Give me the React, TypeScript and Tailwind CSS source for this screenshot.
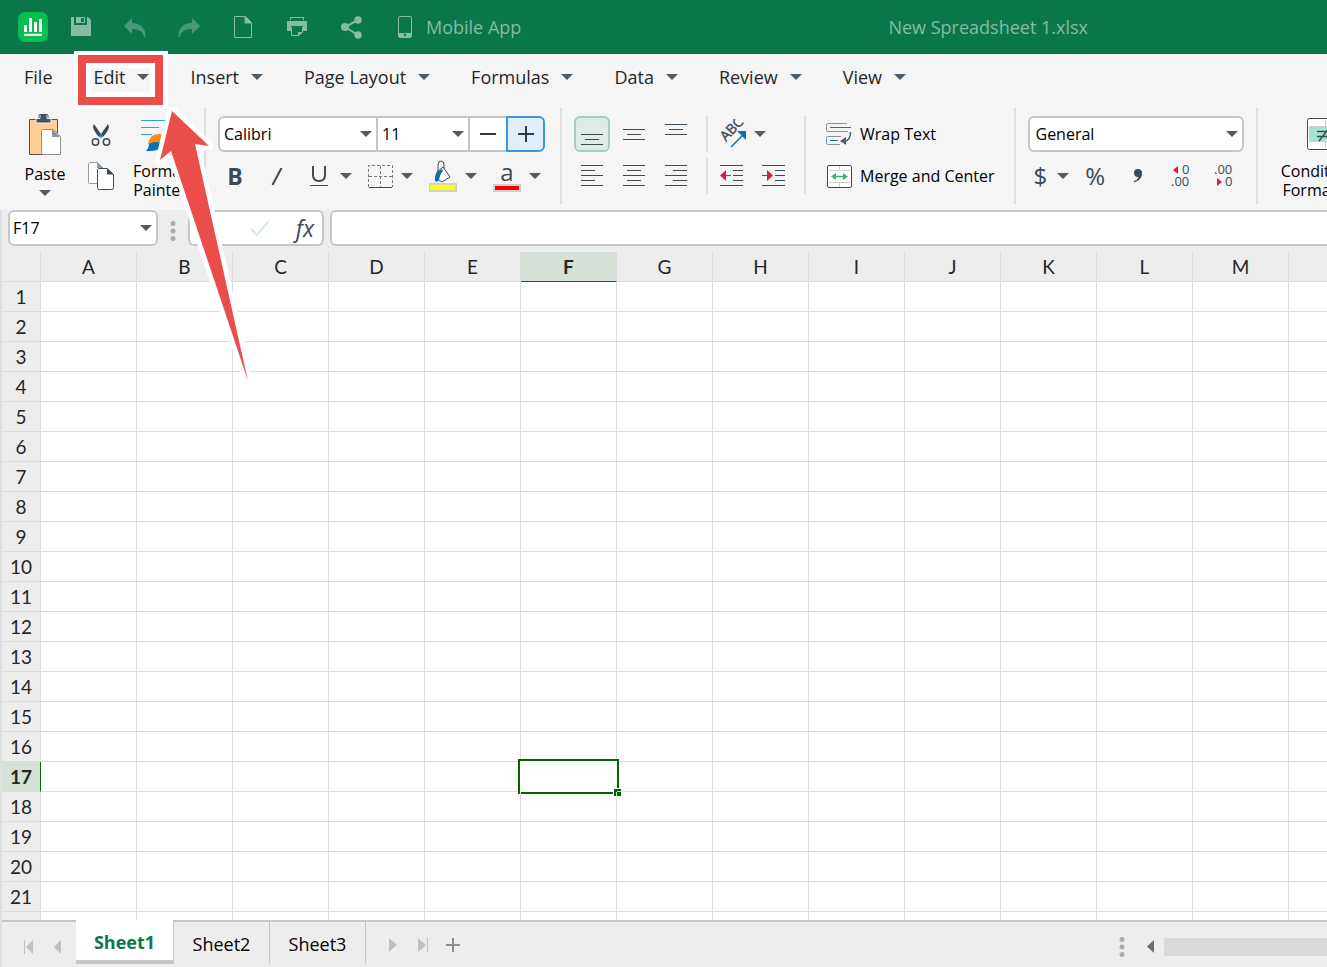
import React from 'react';

const menus = ['File', 'Edit', 'Insert', 'Page Layout', 'Formulas', 'Data', 'Review', 'View'];
const columns = 'ABCDEFGHIJKLMNOPQRSTUVWXYZ'.split('');
const rows = Array.from({ length: 60 }, (_, i) => i + 1);
const sheets = ['Sheet1', 'Sheet2', 'Sheet3'];

export default function App() {
  return (
    <div className="relative flex h-screen flex-col overflow-hidden bg-[#f5f5f5] font-['Open_Sans','Noto_Sans',sans-serif] text-[#262626]">
      <TitleBar />
      <MenuBar />
      <Ribbon />
      <FormulaBar />
      <Grid />
      <SheetBar />
      <Callout />
    </div>
  );
}

function TitleBar() {
  return (
    <header className="flex h-[54px] shrink-0 items-center overflow-hidden bg-[#0c764b] text-[#86bba5]">
      <a href="#home" aria-label="Home" className="ml-[18px] mr-1.5 shrink-0">
        <svg width="30" height="30" viewBox="0 0 30 30">
          <rect width="30" height="30" rx="7" fill="#06bf4f" />
          <path d="M6 13h3v7H6zM11 6h3v14h-3zM16 10h3v10h-3zM21 7h3v13h-3z" fill="#fff" />
          <path d="M6 22.800h18" stroke="#fff" strokeWidth="2" />
        </svg>
      </a>
      <TitleButton label="Save">
        <svg width="20" height="20" viewBox="0 0 20 20" fill="currentColor">
          <path d="M0 0h3v8h13V0h1l3 3v16H0z" />
          <path fillRule="evenodd" d="M5 0h9v6H5zM10 1h3v4h-3z" />
        </svg>
      </TitleButton>
      <TitleButton label="Undo">
        <svg width="22" height="19" viewBox="0 0 22 19" fill="#4a987a">
          <path d="M0 8L8 0v5c8 0 14 5 13.500 14h-1.500c-1-6-5-8-12-8v5z" />
        </svg>
      </TitleButton>
      <TitleButton label="Redo">
        <svg width="22" height="19" viewBox="0 0 22 19" fill="#4a987a">
          <path d="M22 8L14 0v5C6 5 0 10 .5 19H2c1-6 5-8 12-8v5z" />
        </svg>
      </TitleButton>
      <TitleButton label="New">
        <svg width="18" height="22" viewBox="0 0 18 22" fill="none" stroke="currentColor">
          <path d="M.5.5h11l6 6v15H.500z" />
          <path d="M11 1v6h6z" fill="currentColor" />
        </svg>
      </TitleButton>
      <TitleButton label="Print">
        <svg width="20" height="20" viewBox="0 0 20 20" fill="currentColor">
          <path d="M3 0h14v3h-1V1H4v2H3z" />
          <path d="M0 4h20v10h-4V9H4v5H0z" />
          <path d="M4.500 10v8.500h7.500l3.500-3.500v-5" fill="none" stroke="currentColor" />
          <path d="M11 19v-4h5z" />
        </svg>
      </TitleButton>
      <TitleButton label="Share">
        <svg width="21" height="23" viewBox="0 0 21 23" fill="currentColor">
          <path d="M17 4L4 11l13 8" fill="none" stroke="currentColor" strokeWidth="2" />
          <circle cx="17" cy="4" r="3.700" />
          <circle cx="4" cy="11" r="4" />
          <circle cx="17" cy="19" r="3.700" />
        </svg>
      </TitleButton>
      <button className="flex shrink-0 items-center gap-3.5 pl-5 text-lg">
        <svg width="14" height="22" viewBox="0 0 14 22">
          <rect x=".5" y=".5" width="13" height="21" rx="1.500" fill="none" stroke="currentColor" />
          <path d="M1 17h12v4H1z" fill="currentColor" />
          <circle cx="7" cy="19" r="1.200" fill="#0c764b" />
        </svg>
        Mobile App
      </button>
      <h1 className="ml-auto mr-[239px] shrink-0 text-lg">New Spreadsheet 1.xlsx</h1>
    </header>
  );
}

function TitleButton({ label, children }: { label: string; children: React.ReactNode }) {
  return (
    <button aria-label={label} className="flex w-[54px] shrink-0 justify-center">
      {children}
    </button>
  );
}

function MenuBar() {
  return (
    <nav className="flex h-[50px] shrink-0 items-center gap-[41px] overflow-hidden pl-6 text-lg">
      {menus.map((menu) => (
        <button key={menu} className="flex shrink-0 items-center gap-3 pb-1">
          {menu}
          {menu !== 'File' && <Caret />}
        </button>
      ))}
    </nav>
  );
}

function Ribbon() {
  return (
    <div className="flex h-[106px] shrink-0 items-start overflow-hidden pt-1 text-base text-black">
      {/* Clipboard */}
      <button className="ml-5 flex w-[50px] shrink-0 flex-col items-center pt-1.5">
        <svg width="34" height="42" viewBox="0 0 34 42">
          <path d="M1.500 5.500h28v35h-28z" fill="#ffcf91" stroke="#5b5048" />
          <path d="M8 9V4.500h4V1.500q0-1 1-1h5q1 0 1 1v3h4V9z" fill="#425365" stroke="#f5f5f5" />
          <path d="M11 4V1.500q0-1 1-1h7q1 0 1 1V4" fill="none" stroke="#3b4a54" />
          <path d="M14.500 15.500h11l7 7v18h-18q-1-1-1-2v-22z" fill="#fff" stroke="#8f8f8f" />
          <path d="M24 15v8h8z" fill="#8f9294" />
        </svg>
        <span className="mt-2 leading-5">Paste</span>
        <span className="mt-1.5">
          <Caret />
        </span>
      </button>
      <div className="ml-3 flex w-[38px] shrink-0 flex-col items-center">
        <button aria-label="Cut" className="mt-[15px]">
          <svg width="20" height="24" viewBox="0 0 20 24">
            <path d="M3 1l9 13-2 2Q3 9 2 4zM17 1L8 14l2 2q7-7 8-12z" fill="#3b4a54" />
            <path d="M8 13l2-2.500 2 2.500-2 2z" fill="#1c7fc4" />
            <g fill="none" stroke="#3b4a54" strokeWidth="1.500">
              <circle cx="4.500" cy="19" r="3.200" />
              <circle cx="15.500" cy="19" r="3.200" />
            </g>
          </svg>
        </button>
        <button aria-label="Copy" className="mt-[15px]">
          <svg width="28" height="28" viewBox="0 0 28 28" fill="#fff">
            <path d="M2.500.5h8l6 6v15h-14q-1 0-1-1v-19z" stroke="#9a9a9a" />
            <path d="M10 0v6h6z" fill="#9a9a9a" />
            <path d="M11.500 6.500h9l6 6v13q0 2-2 2h-12q-2 0-2-2v-18z" stroke="#3b4a54" />
            <path d="M20 6.500v6h6.500z" fill="#3b4a54" />
          </svg>
        </button>
      </div>
      <button className="ml-2 w-[64px] shrink-0 pt-2.5">
        <svg className="mx-auto" width="38" height="36" viewBox="0 0 38 36">
          <path d="M0 2.500h30M0 9.500h18M0 16.500h11" stroke="#2ea3d6" />
          <path d="M22 14L33 2l3 3-10 13z" fill="#3b4a54" />
          <path d="M7 26q2-11 12-10 7 3 4 10z" fill="#fb8b1a" />
          <path d="M5 33q3-3 3-7 6-4 15 0-4 8-18 7z" fill="#0a6fba" />
        </svg>
        <span className="mt-2 block leading-[19px]">
          Format
          <br />
          Painter
        </span>
      </button>
      <Divider className="ml-3 h-24" />

      {/* Font */}
      <div className="ml-3 mt-2 flex shrink-0 flex-col gap-1.5">
        <div className="flex h-9">
          <Picker label="Font" value="Calibri" className="w-[160px] rounded-l-md border-2 pl-1" />
          <Picker label="Font size" value="11" className="w-[92px] border-y-2 border-r-2 pl-1" />
          <button aria-label="Decrease font size" className="flex w-9 items-center justify-center border-y-2 border-[#c6c6c6] bg-white">
            <svg width="16" height="2">
              <path d="M0 1h16" stroke="#2d3b45" strokeWidth="2" />
            </svg>
          </button>
          <button aria-label="Increase font size" className="flex w-[39px] items-center justify-center rounded-r-md border-2 border-[#3b97df] bg-[#e0eef9]">
            <svg width="16" height="16">
              <path d="M0 8h16M8 0v16" stroke="#2d3b45" strokeWidth="2" />
            </svg>
          </button>
        </div>
        <div className="flex h-9 items-center text-[#3b4a54]">
          <button aria-label="Bold" className="w-[34px] text-[23px] font-bold leading-9">
            B
          </button>
          <button aria-label="Italic" className="ml-2 flex w-[34px] justify-center">
            <svg width="12" height="17">
              <path d="M1.500 17L10.500 0" stroke="#3b4a54" strokeWidth="2" />
            </svg>
          </button>
          <button aria-label="Underline" className="ml-4 flex items-center gap-3">
            <svg width="18" height="22">
              <path d="M3 1v9q0 6 6 6t6-6V1" fill="none" stroke="#3b4a54" strokeWidth="2" />
              <path d="M0 20.500h18" stroke="#3b4a54" />
            </svg>
            <Caret />
          </button>
          <button aria-label="Borders" className="ml-4 flex items-center gap-2">
            <svg width="25" height="23" fill="none" stroke="#6e777d">
              <path d="M.5 22V.5h24V22M12.500 1v21M1 11.500h23" strokeDasharray="3 2" />
              <path d="M1 22.500h23" stroke="#3b4a54" />
            </svg>
            <Caret />
          </button>
          <button aria-label="Fill color" className="ml-4 flex items-center gap-2">
            <svg width="28" height="32" viewBox="0 0 28 32">
              <path d="M9 12V5q0-4 3-4t3 4v6" fill="none" stroke="#3b4a54" />
              <path d="M8 12l6-5 7 10-8 5-6-4z" fill="#fff" stroke="#3b4a54" />
              <path d="M6 21q-1-9 7-12l1 2q-3 3-4 9-2 3-4 1z" fill="#0a6fba" />
              <path d="M0 23h28v9H0z" fill="#d0d0d0" />
              <path d="M1 25h25v5H1z" fill="#ff0" />
            </svg>
            <Caret />
          </button>
          <button aria-label="Font color" className="ml-4 flex items-center gap-2">
            <span className="flex w-7 flex-col items-center">
              <span className="text-2xl leading-6">a</span>
              <span className="h-2 w-full border-2 border-[#d0d0d0] bg-[#f00]" />
            </span>
            <Caret />
          </button>
        </div>
      </div>
      <Divider className="ml-[15px] h-24" />

      {/* Alignment */}
      <div className="ml-3 mt-2 grid shrink-0 grid-cols-3 gap-1.5">
        <button aria-label="Align bottom" className="flex size-9 items-center justify-center rounded-md border-2 border-[#a5cfbc] bg-[#dfece5]">
          <Lines d="M0 14.500h22M4 19.500h14M0 24.500h22" />
        </button>
        <AlignButton label="Align middle" d="M0 9.500h22M4 14.500h14M0 19.500h22" />
        <AlignButton label="Align top" d="M0 4.500h22M4 9.500h14M0 14.500h22" />
        <AlignButton label="Align left" d="M0 3.500h22M0 8.500h14M0 13.500h22M0 18.500h14M0 23.500h22" />
        <AlignButton label="Align center" d="M0 3.500h22M4 8.500h14M0 13.500h22M4 18.500h14M0 23.500h22" />
        <AlignButton label="Align right" d="M0 3.500h22M8 8.500h14M0 13.500h22M8 18.500h14M0 23.500h22" />
      </div>
      <div className="ml-3 mt-2 flex shrink-0 flex-col gap-1.5">
        <Divider className="h-9" />
        <Divider className="h-9" />
      </div>
      <div className="mt-2 flex w-24 shrink-0 flex-col gap-1.5">
        <button aria-label="Orientation" className="flex h-9 items-center gap-1.5 pl-2">
          <svg width="32" height="30" viewBox="0 0 32 30">
            <text x="0" y="0" transform="translate(10 23) rotate(-47)" fontSize="14" fill="#3b4a54" stroke="#3b4a54" strokeWidth=".4">
              ABC
            </text>
            <path d="M15 28L28 15" stroke="#0a6fba" strokeWidth="1.500" />
            <path d="M21 12h9v9z" fill="#0a6fba" />
          </svg>
          <Caret />
        </button>
        <div className="flex h-9 items-center gap-[19px] pl-3">
          <button aria-label="Decrease indent">
            <svg width="23" height="22" stroke="#3b4a54">
              <path d="M0 .5h23M13 5.500h10M13 10.500h10M13 15.500h10M0 20.500h23" />
              <path d="M5 10.500h6" stroke="#e5173f" />
              <path d="M0 10.500l6-5.500v11z" fill="#e5173f" stroke="none" />
            </svg>
          </button>
          <button aria-label="Increase indent">
            <svg width="23" height="22" stroke="#3b4a54">
              <path d="M0 .5h23M13 5.500h10M13 10.500h10M13 15.500h10M0 20.500h23" />
              <path d="M0 10.500h6" stroke="#e5173f" />
              <path d="M11 10.500L5 5v11z" fill="#e5173f" stroke="none" />
            </svg>
          </button>
        </div>
      </div>
      <Divider className="mt-2 h-[78px]" />
      <div className="ml-5 mt-2 flex shrink-0 flex-col gap-1.5">
        <button className="flex h-9 items-center gap-2">
          <svg width="26" height="23" viewBox="0 0 26 23" fill="none">
            <path d="M21 .5H2Q.5.500.5 2v5q0 1.500 1.500 1.500h20M15 13.500H2q-1.500 0-1.500 1.500v5q0 1.500 1.500 1.500h12" stroke="#8d9296" />
            <path d="M4 4.500h21M4 17.500h8" stroke="#0a7bc9" />
            <path d="M24.500 9q0 9-6 9" stroke="#4c6170" strokeWidth="1.500" />
            <path d="M14 18l6-4v8z" fill="#4c6170" />
          </svg>
          Wrap Text
        </button>
        <button className="flex h-9 items-center gap-2">
          <svg width="26" height="23" viewBox="0 0 26 23" fill="#fff">
            <rect x="1.500" y=".5" width="24" height="22" rx="1.500" stroke="#3b4a54" />
            <path d="M3 5.500h21M3 17.500h21M13.500 1v4M13.500 18v4" stroke="#d0d0d0" />
            <path d="M8 11.500h11" stroke="#3aae78" strokeWidth="1.500" />
            <path d="M5 11.500l5-3.500v7zM22 11.500L17 8v7z" fill="#3aae78" />
          </svg>
          Merge and Center
        </button>
      </div>
      <Divider className="ml-[19px] h-24" />

      {/* Number */}
      <div className="ml-3 mt-2 flex shrink-0 flex-col gap-1.5">
        <Picker label="Number format" value="General" className="h-9 w-[216px] rounded-md border-2 pl-1.5" />
        <div className="flex h-9 items-center text-[#3b4a54]">
          <button aria-label="Currency" className="ml-1.5 flex items-center gap-2.5 text-2xl leading-9">
            $
            <Caret />
          </button>
          <button aria-label="Percent" className="ml-4 text-2xl leading-9">
            %
          </button>
          <button aria-label="Comma style" className="ml-7">
            <svg width="10" height="14" viewBox="0 0 10 14" fill="#3b4a54">
              <path d="M1 4a4 4 0 0 1 8 0c0 5-3 8-8 9.500V12c3-1 4-2 4.500-4C3 8.500 1 7 1 4z" />
            </svg>
          </button>
          <button aria-label="Increase decimal" className="ml-7">
            <svg width="19" height="24" className="text-[13px]" fill="#3b4a54">
              <text x="11" y="10">0</text>
              <text x="0" y="22">.00</text>
              <path d="M2 6l5-4v8z" fill="#e5173f" />
            </svg>
          </button>
          <button aria-label="Decrease decimal" className="ml-6">
            <svg width="19" height="24" className="text-[13px]" fill="#3b4a54">
              <text x="0" y="10">.00</text>
              <text x="11" y="22">0</text>
              <path d="M8 18l-5-4v8z" fill="#e5173f" />
            </svg>
          </button>
        </div>
      </div>
      <Divider className="ml-3 h-24" />
      <button className="ml-[17px] flex w-[98px] shrink-0 flex-col items-center pt-2.5">
        <svg width="34" height="32" viewBox="0 0 34 32">
          <rect x=".5" y=".5" width="33" height="31" rx="2" fill="#fff" stroke="#3b4a54" />
          <path d="M2 8.500h30M2 23.500h30M18.500 2v28" stroke="#ccc" />
          <path d="M2 9h30v14H2z" fill="#a9e3d0" />
          <path d="M10 13.500h14M10 18.500h14M12 23L23 9" stroke="#3b4a54" strokeWidth="1.500" />
        </svg>
        <span className="mt-3 whitespace-nowrap leading-[19px]">
          Conditional
          <br />
          <span className="-mx-2">Formatting</span>
        </span>
      </button>
    </div>
  );
}

function FormulaBar() {
  return (
    <div className="flex h-[42px] shrink-0 items-start border-l-2 border-[#e0e0e0] bg-[#ededed] pl-1.5 text-base text-black">
      <Picker label="Name box" value="F17" className="h-9 w-[150px] shrink-0 rounded-md border-2 pl-[3px]" />
      <span className="mx-3 pt-[11px]">
        <Dots />
      </span>
      <div className="flex h-9 w-[136px] shrink-0 items-center justify-end rounded-md border-2 border-[#c6c6c6] bg-white pr-2">
        <button aria-label="Accept" className="mr-[26px]">
          <svg width="20" height="16" fill="none">
            <path d="M1 9l6 6L19 1" stroke="#d5ece2" strokeWidth="2" />
          </svg>
        </button>
        <button aria-label="Insert function" className="text-[23px] italic leading-8 text-[#3b4a54]">
          fx
        </button>
      </div>
      <input aria-label="Formula" className="ml-1.5 h-9 min-w-0 flex-1 rounded-l-md border-2 border-r-0 border-[#c6c6c6] bg-white px-2 outline-none" />
    </div>
  );
}

function Grid() {
  return (
    <main className="min-h-0 flex-1 overflow-hidden border-l-2 border-[#e0e0e0] bg-white font-['Lato','Open_Sans',sans-serif] text-[19px] leading-7">
      <table className="w-[2535px] table-fixed border-separate border-spacing-0">
        <thead>
          <tr className="h-[30px]">
            <th aria-label="Select all" className="w-[39px] border-b border-r border-[#dcdcdc] bg-[#ededed] p-0" />
            {columns.map((col) => (
              <th
                key={col}
                className={
                  col === 'F'
                    ? 'border-b border-r border-b-[#0b6b0b] border-r-[#dcdcdc] bg-[#d5e1d6] p-0 pt-px font-bold'
                    : 'border-b border-r border-[#dcdcdc] bg-[#ededed] p-0 pt-px font-normal'
                }
              >
                {col}
              </th>
            ))}
          </tr>
        </thead>
        <tbody>
          {rows.map((row) => (
            <tr key={row} className="h-[30px]">
              <th
                className={
                  row === 17
                    ? 'border-b border-r border-b-[#dcdcdc] border-r-[#0b6b0b] bg-[#d5e1d6] p-0 pt-px font-bold'
                    : 'border-b border-r border-[#dcdcdc] bg-[#ededed] p-0 pt-px font-normal'
                }
              >
                {row}
              </th>
              {columns.map((col) => (
                <td key={col} className="relative border-b border-r border-[#dcdcdc] p-0">
                  {row === 17 && col === 'F' && (
                    <div className="absolute -inset-x-[3px] -inset-y-[3px] border-2 border-[#006400] bg-white">
                      <span className="absolute -bottom-1 -right-1 size-2 border-l border-t border-white bg-[#006400]" />
                    </div>
                  )}
                </td>
              ))}
            </tr>
          ))}
        </tbody>
      </table>
    </main>
  );
}

function SheetBar() {
  return (
    <footer className="flex h-[47px] shrink-0 items-start border-l-2 border-[#e0e0e0] bg-[#ededed] text-lg text-black">
      <div className="flex h-full w-[74px] items-center gap-5 border-t-2 border-[#c6c6c6] pl-[22px] pt-1">
        <button aria-label="First sheet">
          <svg width="10" height="14" fill="#c0c0c0">
            <path d="M0 0h1v14H0zM9 0v14L2 7z" />
          </svg>
        </button>
        <button aria-label="Previous sheet">
          <svg width="7" height="14" fill="#c0c0c0">
            <path d="M7 0v14L0 7z" />
          </svg>
        </button>
      </div>
      {sheets.map((sheet, i) => (
        <button
          key={sheet}
          className={
            i === 0
              ? 'h-11 w-[98px] shrink-0 border-b-4 border-r border-[#c6c6c6] bg-white pt-1 font-bold text-[#0c764b]'
              : 'h-11 w-24 shrink-0 border-r border-t-2 border-[#c6c6c6] pt-px'
          }
        >
          {sheet}
        </button>
      ))}
      <div className="flex h-full flex-1 items-center border-t-2 border-[#c6c6c6]">
        <button aria-label="Next sheet" className="ml-[23px]">
          <svg width="8" height="14" fill="#c0c0c0">
            <path d="M0 0v14l8-7z" />
          </svg>
        </button>
        <button aria-label="Last sheet" className="ml-[21px]">
          <svg width="10" height="14" fill="#c0c0c0">
            <path d="M9 0h1v14H9zM0 0v14l8-7z" />
          </svg>
        </button>
        <button aria-label="Add sheet" className="ml-[18px]">
          <svg width="14" height="14">
            <path d="M0 7h14M7 0v14" stroke="#8f8f8f" strokeWidth="2" />
          </svg>
        </button>
        <span className="ml-auto mt-1">
          <Dots />
        </span>
        <button aria-label="Scroll left" className="ml-[22px] mt-1">
          <svg width="7" height="13" fill="#6b6f72">
            <path d="M7 0v13L0 6.500z" />
          </svg>
        </button>
        <div className="ml-2.5 mt-1 h-[18px] w-[163px] bg-[#d9d9d9]" />
      </div>
    </footer>
  );
}

function Callout() {
  return (
    <svg className="pointer-events-none absolute left-0 top-0 z-10" width="260" height="390" viewBox="0 0 260 390">
      <rect x="76" y="53" width="90" height="54" fill="none" stroke="#fff" strokeWidth="4" />
      <rect x="88.500" y="65.500" width="64" height="29" fill="none" stroke="#fff" strokeWidth="5" />
      <rect x="82" y="59" width="77" height="42" fill="none" stroke="#eb4d4b" strokeWidth="8" />
      <path
        d="M172 111l37 35-14-2 53 237-77-230-11 9z"
        fill="#eb4d4b"
        stroke="#fff"
        strokeWidth="9"
        strokeLinejoin="round"
        paintOrder="stroke"
      />
    </svg>
  );
}

function Picker({ label, value, className }: { label: string; value: string; className: string }) {
  return (
    <div className={`relative flex items-center border-[#c6c6c6] bg-white ${className}`}>
      <select aria-label={label} defaultValue={value} className="h-full w-full appearance-none bg-transparent pr-6 outline-none">
        <option>{value}</option>
      </select>
      <span className="pointer-events-none absolute right-1">
        <Caret />
      </span>
    </div>
  );
}

function AlignButton({ label, d }: { label: string; d: string }) {
  return (
    <button aria-label={label} className="flex size-9 items-center justify-center">
      <Lines d={d} />
    </button>
  );
}

function Lines({ d }: { d: string }) {
  return (
    <svg width="22" height="28" className="shrink-0">
      <path d={d} stroke="#3b4a54" />
    </svg>
  );
}

function Divider({ className }: { className: string }) {
  return <div className={`w-0.5 shrink-0 bg-[#dedede] ${className}`} />;
}

function Caret() {
  return (
    <svg width="12" height="6" viewBox="0 0 12 6" fill="#4c5d69">
      <path d="M0 0h12L6 6z" />
    </svg>
  );
}

function Dots() {
  return (
    <svg width="6" height="20" fill="#ababab">
      <circle cx="3" cy="2.500" r="2.500" />
      <circle cx="3" cy="10" r="2.500" />
      <circle cx="3" cy="17.500" r="2.500" />
    </svg>
  );
}
